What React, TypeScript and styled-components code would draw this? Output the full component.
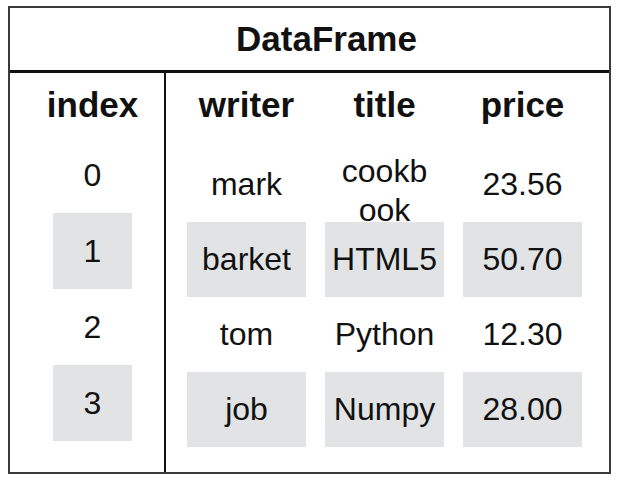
import React from "react";
import styled, { createGlobalStyle } from "styled-components";

const GlobalStyle = createGlobalStyle`
  html, body {
    margin: 0;
    padding: 0;
    background: #ffffff;
  }
  body {
    font-family: "Liberation Sans", Arial, Helvetica, sans-serif;
    color: #111111;
  }
`;

const Frame = styled.div`
  box-sizing: border-box;
  margin: 6px 0 0 8px;
  width: 603px;
  height: 468px;
  border: 2px solid #3a3a3a;
  display: flex;
  flex-direction: column;
`;

const TitleBar = styled.div`
  height: 62px;
  flex: none;
  border-bottom: 3px solid #111111;
  display: flex;
  align-items: center;
  justify-content: center;
  padding-left: 34px;
  font-size: 35px;
  font-weight: 700;
`;

const Body = styled.div`
  flex: 1;
  display: flex;
`;

const IndexColumn = styled.div`
  width: 154px;
  box-sizing: border-box;
  padding-left: 43px;
  display: flex;
  flex-direction: column;
`;

const DataColumn = styled.div`
  flex: 1;
  border-left: 2px solid #111111;
  padding-left: 21px;
  display: flex;
  flex-direction: column;
`;

const HeaderRow = styled.div<{ $cols: number; $width: number; $gapBelow?: number }>`
  height: 64px;
  flex: none;
  display: grid;
  grid-template-columns: ${(p) => `repeat(${p.$cols}, ${p.$width}px)`};
  grid-auto-rows: 64px;
  column-gap: 19px;
  margin-bottom: ${(p) => p.$gapBelow ?? 0}px;
`;

const HeaderCell = styled.div`
  display: flex;
  align-items: center;
  justify-content: center;
  font-size: 35px;
  font-weight: 700;
  white-space: nowrap;
`;

const Row = styled.div<{ $cols: number; $width: number; $height: number }>`
  height: ${(p) => p.$height}px;
  flex: none;
  display: grid;
  grid-template-columns: ${(p) => `repeat(${p.$cols}, ${p.$width}px)`};
  grid-auto-rows: ${(p) => p.$height}px;
  column-gap: 19px;
`;

const Cell = styled.div<{ $shaded: boolean }>`
  display: flex;
  align-items: center;
  justify-content: center;
  font-size: 32px;
  white-space: nowrap;
  min-height: 0;
  background: ${(p) => (p.$shaded ? "#e1e3e5" : "transparent")};
`;

const Wrapped = styled.span`
  display: block;
  flex: none;
  max-width: 90px;
  white-space: normal;
  word-break: break-all;
  text-align: center;
  line-height: 39px;
  margin-top: 13px;
`;

const columns = ["writer", "title", "price"];
const rows = [
  { index: "0", writer: "mark", title: "cookbook", price: "23.56" },
  { index: "1", writer: "barket", title: "HTML5", price: "50.70" },
  { index: "2", writer: "tom", title: "Python", price: "12.30" },
  { index: "3", writer: "job", title: "Numpy", price: "28.00" },
];

export default function App() {
  return (
    <>
      <GlobalStyle />
      <Frame>
        <TitleBar>DataFrame</TitleBar>
        <Body>
          <IndexColumn>
            <HeaderRow $cols={1} $width={79}>
              <HeaderCell>index</HeaderCell>
            </HeaderRow>
            {rows.map((r, i) => (
              <Row key={r.index} $cols={1} $width={79} $height={76}>
                <Cell $shaded={i % 2 === 1}>{r.index}</Cell>
              </Row>
            ))}
          </IndexColumn>
          <DataColumn>
            <HeaderRow $cols={3} $width={119} $gapBelow={10}>
              {columns.map((c) => (
                <HeaderCell key={c}>{c}</HeaderCell>
              ))}
            </HeaderRow>
            {rows.map((r, i) => (
              <Row key={r.index} $cols={3} $width={119} $height={75}>
                {columns.map((c) => {
                  const v = (r as Record<string, string>)[c];
                  const wraps = v.length > 7;
                  return (
                    <Cell key={c} $shaded={i % 2 === 1}>
                      {wraps ? <Wrapped>{v}</Wrapped> : v}
                    </Cell>
                  );
                })}
              </Row>
            ))}
          </DataColumn>
        </Body>
      </Frame>
    </>
  );
}
